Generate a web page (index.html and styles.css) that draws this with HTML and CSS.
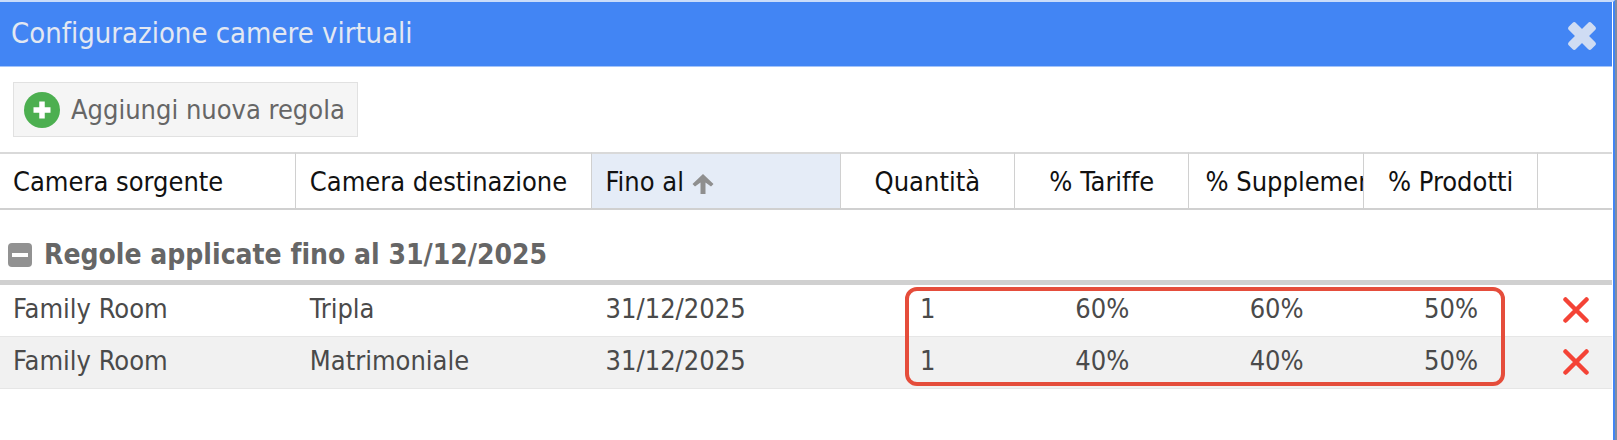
FILE: index.html
```html
<!DOCTYPE html>
<html lang="it">
<head>
<meta charset="utf-8">
<title>Configurazione camere virtuali</title>
<link rel="stylesheet" href="styles.css">
</head>
<body>
<main class="window">
  <header class="titlebar">
    <h1 class="title">Configurazione camere virtuali</h1>
    <button class="close" type="button" aria-label="Chiudi">
      <svg width="28" height="28" viewBox="0 0 28 28"><g fill="#cfdcf3" transform="rotate(45 14 14)"><rect x="-2" y="9" width="32" height="10" rx="2.500"/><rect x="9" y="-2" width="10" height="32" rx="2.500"/></g></svg>
    </button>
  </header>
  <div class="toolbar">
    <button class="add" type="button">
      <svg width="36" height="36" viewBox="0 0 36 36"><circle cx="18" cy="18" r="18" fill="#4caf50"/><path d="M18 9.500v17M9.500 18h17" stroke="#fff" stroke-width="5.500"/></svg>
      Aggiungi nuova regola
    </button>
  </div>
  <div class="grid">
    <table class="rules">
      <colgroup>
        <col class="col-source"><col class="col-target"><col class="col-until"><col class="col-num"><col class="col-num"><col class="col-num"><col class="col-num"><col class="col-action">
      </colgroup>
      <thead>
        <tr>
          <th scope="col">Camera sorgente</th>
          <th scope="col">Camera destinazione</th>
          <th scope="col" class="sorted" aria-sort="ascending">Fino al
            <svg class="arrow" width="22" height="20" viewBox="0 0 22 20"><path d="M11 0L21.500 10L19 12.500L13.500 8.500V20H8.500V8.500L3 12.500L0.500 10Z" fill="#8f8f8f"/></svg></th>
          <th scope="col" class="num">Quantità</th>
          <th scope="col" class="num">% Tariffe</th>
          <th scope="col" class="num">% Supplementi</th>
          <th scope="col" class="num">% Prodotti</th>
          <td></td>
        </tr>
      </thead>
      <tbody>
        <tr class="group">
          <th colspan="8" scope="rowgroup">
            <button class="toggle" type="button" aria-expanded="true">
              <svg width="24" height="24" viewBox="0 0 24 24"><rect width="24" height="24" rx="4" fill="#929292"/><path d="M4 12h16" stroke="#fff" stroke-width="4"/></svg>
              Regole applicate fino al 31/12/2025
            </button>
          </th>
        </tr>
        <tr class="row">
          <td>Family Room</td><td>Tripla</td><td>31/12/2025</td>
          <td class="num">1</td><td class="num">60%</td><td class="num">60%</td><td class="num">50%</td>
          <td class="action"><button class="delete" type="button" aria-label="Elimina"><svg width="26" height="26" viewBox="0 0 26 26"><path d="M2.500 2.500L23.500 23.500M23.500 2.500L2.500 23.500" stroke="#f44336" stroke-width="4.500" stroke-linecap="round"/></svg></button></td>
        </tr>
        <tr class="row alt">
          <td>Family Room</td><td>Matrimoniale</td><td>31/12/2025</td>
          <td class="num">1</td><td class="num">40%</td><td class="num">40%</td><td class="num">50%</td>
          <td class="action"><button class="delete" type="button" aria-label="Elimina"><svg width="26" height="26" viewBox="0 0 26 26"><path d="M2.500 2.500L23.500 23.500M23.500 2.500L2.500 23.500" stroke="#f44336" stroke-width="4.500" stroke-linecap="round"/></svg></button></td>
        </tr>
      </tbody>
    </table>
    <div class="highlight"></div>
  </div>
</main>
</body>
</html>
```
FILE: styles.css
```css
* {
  box-sizing: border-box;
}

body {
  margin: 0;
  border-right: 2px solid #7f8ba3;
  background: #fff;
  color: #4a4a4a;
  font-family: "DejaVu Sans Condensed", Tahoma, sans-serif;
  font-size: 27px;
  font-variant-ligatures: none;
  line-height: 32px;
}

button {
  border: 0;
  padding: 0;
  background: none;
  color: inherit;
  font: inherit;
  font-variant-ligatures: none;
}

svg {
  display: block;
  fill: none;
}

.window {
  min-height: 100vh;
  padding-right: 1px;
  border-top: 2px solid #c9dcfa;
  border-right: 2px solid #4285f4;
}

.titlebar {
  display: flex;
  align-items: center;
  justify-content: space-between;
  height: 65px;
  padding: 0 16px 0 11px;
  border-bottom: 1px solid #a3c4fa;
  background: #4285f4;
}

.title {
  margin: 0 0 2px;
  color: #e3e8f2;
  font-size: 29px;
  font-weight: 400;
}

.close {
  margin-top: 3px;
}

.toolbar {
  padding: 15px 13px;
}

.add {
  display: flex;
  align-items: center;
  gap: 11px;
  height: 55px;
  padding: 0 12px 0 10px;
  border: 1px solid #e1e1e1;
  background: #f5f5f5;
  color: #666;
}

.grid {
  position: relative;
}

.rules {
  width: 100%;
  border-spacing: 0;
  table-layout: fixed;
}

.col-source { width: 18.35%; }
.col-target { width: 18.35%; }
.col-until { width: 15.45%; }
.col-num { width: 10.82%; }
.col-action { width: 4.57%; }

.rules th,
.rules td {
  overflow: hidden;
  padding: 0 14px;
  text-align: left;
  font-weight: 400;
  white-space: nowrap;
}

.rules th:first-child,
.rules td:first-child {
  padding-left: 13px;
}

.rules thead th,
.rules thead td {
  height: 58px;
  padding-top: 2px;
  border-top: 2px solid #d9d9d9;
  border-bottom: 2px solid #d0d0d0;
  color: #111;
}

.rules thead th {
  border-right: 1px solid #d0d0d0;
}

.rules thead .sorted {
  background: #e5ecf7;
}

.arrow {
  display: inline-block;
  vertical-align: middle;
}

.rules .num {
  padding-right: 16px;
  padding-left: 16px;
  text-align: center;
}

.rules .group th {
  height: 75px;
  padding: 20px 8px 0;
  border-bottom: 5px solid #d0d0d0;
}

.toggle {
  display: flex;
  align-items: center;
  gap: 12px;
  color: #666;
  font-size: 28px;
  font-weight: 700;
}

.rules .row td {
  height: 52px;
  padding-bottom: 3px;
  border-bottom: 1px solid #e6e6e6;
}

.rules .alt td {
  background: #f1f1f1;
}

.rules .row .action {
  padding: 0 0 2px 2px;
}

.delete {
  display: block;
  margin: 0 auto;
}

.highlight {
  position: absolute;
  bottom: 3px;
  left: 56.15%;
  width: 37.2%;
  height: 99px;
  border: 4px solid #e54d3b;
  border-radius: 12px;
  pointer-events: none;
}
```
